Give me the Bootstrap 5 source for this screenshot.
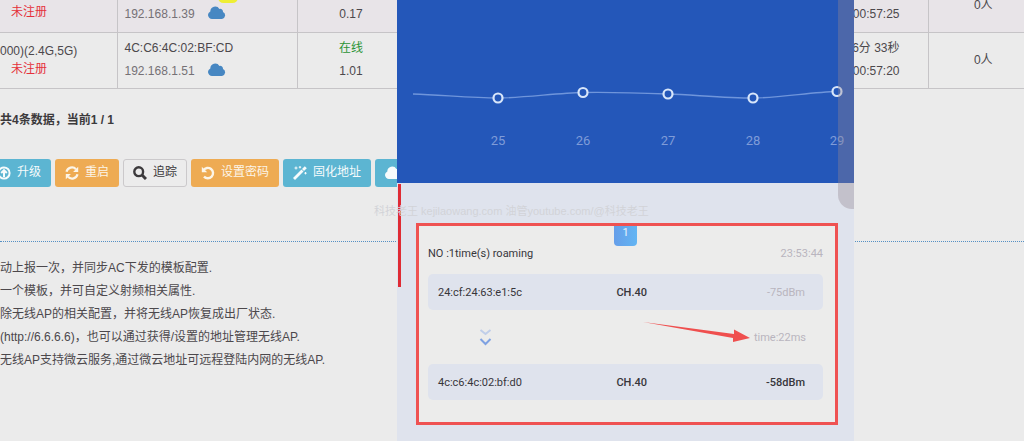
<!DOCTYPE html>
<html lang="zh-CN">
<head>
<meta charset="utf-8">
<meta name="viewport" content="width=device-width, initial-scale=1">
<title>无线AP管理</title>
<link href="https://cdn.jsdelivr.net/npm/bootstrap@5.3.0/dist/css/bootstrap.min.css" rel="stylesheet">
<style>
body{background:#ebebeb;color:#4c484c;font:12px/23px "Liberation Sans","Noto Sans CJK SC",sans-serif}
.screen{min-height:100vh}
.ap-table{table-layout:fixed;width:100%;border-collapse:collapse;white-space:nowrap}
.ap-table td{border:1px solid #c6c4c7;border-top:0;padding:4px 7px;height:56px}
.ap-table td:first-child{border-left:0;padding-left:0;line-height:18px}
.ap-table td:last-child{border-right:0;padding-left:21px}
.ap-table tr.cut td{background:#e8e4e8;height:32px;padding-top:3px;padding-bottom:3px;vertical-align:top}
.ap-table td.uptime{padding-right:28px}
.unreg{color:#e5303a;padding-left:11px}
.ip{color:#757176}
.online{color:#2c9436}
.cloud{width:18px;height:14px;fill:#4787c2;margin:0 0 4px 13px}
.dot-mark{top:-8px;left:218px;width:20px;height:11px;border-radius:6px;background:#eeee35}
.summary{margin:20px 0 27px;color:#3c3a3c}
.tools{gap:4px;margin-left:-13px}
.tool{display:flex;align-items:center;gap:6px;height:28px;padding:0 9px;border:1px solid transparent;border-radius:3px;color:#fbf9f4;font-size:12px;white-space:nowrap}
.tool svg{width:14px;height:14px;fill:none;stroke:currentColor;stroke-width:2.4}
.tool-blue,.tool-blue:hover{background:#5cb5d2;color:#f6fbfc}
.tool-orange,.tool-orange:hover{background:#eeab53;color:#fcf5e8}
.tool-plain,.tool-plain:hover{background:#ececec;border-color:#cbc9cb;color:#3c3a3c}
.notes{margin-top:54px;padding-top:15px;border-top:1px dotted #5590c4;white-space:nowrap}
.phone{top:0;bottom:0;left:calc(50% - 115px);right:170px;background:#dfe3ed;font-family:Roboto,sans-serif;font-size:11px;color:#37363b}
.chart{height:183px;background:#2457b9}
.chart text{font-size:13px;fill:#7f9cd8;text-anchor:middle}
.handle{top:0;right:0;width:16px;height:209px;border-bottom-left-radius:14px;background:rgba(146,134,144,.36)}
.redline{top:184px;left:1px;width:3px;height:103px;background:#df2b34}
.roam{margin:40px 16px 0 19px;border:3px solid #ef5252;background:#ececeb;padding:0 12px 22px 9px}
.count{width:23px;height:20px;line-height:14px;border-radius:0 0 4px 4px;background:linear-gradient(90deg,#659ee9,#62b5f3);color:#e8f3fc}
.roam-title{line-height:16px;padding-bottom:12px}
.hop{height:36px;padding:0 18px 0 10px;border-radius:5px;background:#dfe3ed;display:grid;grid-template-columns:8fr 60px 7fr;align-items:center}
.between{height:54px;padding:0 17px 0 51px}
.pale{color:#b9b5be}
.watermark{top:200px;left:calc(50% - 138px);font-size:11px;color:#d2d3d8;white-space:nowrap}
</style>
</head>
<body>
<div class="screen position-relative overflow-hidden">
  <main>
    <table class="ap-table">
      <colgroup><col style="width:117px"><col style="width:180px"><col style="width:108px"><col><col style="width:96px"></colgroup>
      <tbody>
        <tr class="cut">
          <td><div class="unreg">未注册</div></td>
          <td><span class="ip">192.168.1.39</span><svg class="cloud" viewBox="0 0 18 14" aria-hidden="true"><path d="M4 13A4 4 0 0 1 2.300 5.400 4.900 4.900 0 0 1 11.400 2.900 2.900 2.900 0 0 1 15 6 3.700 3.700 0 0 1 14 13Z"/></svg></td>
          <td class="text-center">0.17</td>
          <td class="uptime text-end">00:57:25</td>
          <td class="text-center pt-0"><div style="line-height:11px">0人</div></td>
        </tr>
        <tr>
          <td class="align-middle"><div>000)(2.4G,5G)</div><div class="unreg">未注册</div></td>
          <td><div>4C:C6:4C:02:BF:CD</div><span class="ip">192.168.1.51</span><svg class="cloud" viewBox="0 0 18 14" aria-hidden="true"><path d="M4 13A4 4 0 0 1 2.300 5.400 4.900 4.900 0 0 1 11.400 2.900 2.900 2.900 0 0 1 15 6 3.700 3.700 0 0 1 14 13Z"/></svg></td>
          <td class="text-center"><div class="online">在线</div>1.01</td>
          <td class="uptime text-end">6分 33秒<br>00:57:20</td>
          <td class="text-center align-middle">0人</td>
        </tr>
      </tbody>
    </table>
    <div class="dot-mark position-absolute"></div>
    <p class="summary fw-bold">共4条数据，当前1 / 1</p>
    <div class="tools d-flex">
      <button type="button" class="tool tool-blue"><svg viewBox="0 0 14 14"><circle cx="7" cy="7" r="5.600" stroke-width="2"/><path d="M7 11V4.500M4.200 7 7 4.200 9.800 7" stroke-width="2"/></svg>升级</button>
      <button type="button" class="tool tool-orange"><svg viewBox="0 0 14 14"><path d="M1.500 5.800A5.600 5.600 0 0 1 11 3.200M12.500 8.200A5.600 5.600 0 0 1 3 10.800" stroke-width="2.200"/><path d="M13.200.8v5.100H8.100ZM.8 13.200V8.100h5.100Z" fill="currentColor" stroke="none"/></svg>重启</button>
      <button type="button" class="tool tool-plain"><svg viewBox="0 0 14 14"><circle cx="5.700" cy="5.700" r="4.400"/><path d="m9 9 4 4" stroke-width="3"/></svg>追踪</button>
      <button type="button" class="tool tool-orange"><svg viewBox="0 0 14 14"><path d="M2.500 4.200A5.200 5.200 0 1 1 3 10.600"/><path d="M.8.800v5.400h5.400Z" fill="currentColor" stroke="none"/></svg>设置密码</button>
      <button type="button" class="tool tool-blue"><svg viewBox="0 0 14 14"><path d="M1 13 9.500 4.500" stroke-width="2.800"/><path d="m10 4 2.800-2.800" stroke-width="2.800"/><path d="M3 .5v3M1.500 2h3M7 0v2.400M5.800 1.200h2.400M12.500 6v2.400M11.300 7.200h2.400" stroke-width="1"/></svg>固化地址</button>
      <button type="button" class="tool tool-blue" aria-label="云服务"><svg style="width:18px" viewBox="0 0 18 14" aria-hidden="true"><path fill="currentColor" stroke="none" d="M4 13A4 4 0 0 1 2.300 5.400 4.900 4.900 0 0 1 11.400 2.900 2.900 2.900 0 0 1 15 6 3.700 3.700 0 0 1 14 13Z"/></svg></button>
    </div>
    <div class="notes">
      <div>动上报一次，并同步AC下发的模板配置.</div>
      <div>一个模板，并可自定义射频相关属性.</div>
      <div>除无线AP的相关配置，并将无线AP恢复成出厂状态.</div>
      <div>(http://6.6.6.6)，也可以通过获得/设置的地址管理无线AP.</div>
      <div>无线AP支持微云服务,通过微云地址可远程登陆内网的无线AP.</div>
    </div>
  </main>
  <section class="phone position-absolute">
    <div class="chart">
      <svg class="d-block w-100 h-100" viewBox="0 0 457 183">
        <path d="M16 94C45 95 75 98 101 98S160 93 186 92.500 245 93 271 94 330 98 356 98 415 92 440 91.500" fill="none" stroke="#6f95db" stroke-width="1.300"/>
        <g fill="#2457b9" stroke="#d8e6fa" stroke-width="2.200"><circle cx="101" cy="98" r="4.500"/><circle cx="186" cy="92.500" r="4.500"/><circle cx="271" cy="94" r="4.500"/><circle cx="356" cy="98" r="4.500"/><circle cx="440" cy="91.500" r="4.500"/></g>
        <text x="101" y="145">25</text><text x="186" y="145">26</text><text x="271" y="145">27</text><text x="356" y="145">28</text><text x="440" y="145">29</text>
      </svg>
    </div>
    <div class="roam">
      <div class="count text-center mx-auto">1</div>
      <div class="roam-title d-flex justify-content-between"><span>NO :1time(s) roaming</span><span class="pale">23:53:44</span></div>
      <div class="hop"><span>24:cf:24:63:e1:5c</span><span class="text-center fw-medium">CH.40</span><span class="text-end pale">-75dBm</span></div>
      <div class="between d-flex align-items-center">
        <svg width="13" height="20" viewBox="0 0 13 20" fill="none" stroke-width="2"><path d="m1.500 3 5 4 5-4" stroke="#c0cee9"/><path d="m1.500 12 5 5 5-5" stroke="#7fa2e2"/></svg>
        <svg class="ms-auto me-1" width="107" height="40" viewBox="0 0 107 40"><path d="M0 5 91 17V12.500L107 21 90 25V21Z" fill="#ef4f4e"/></svg>
        <span class="pale">time:22ms</span>
      </div>
      <div class="hop"><span>4c:c6:4c:02:bf:d0</span><span class="text-center fw-medium">CH.40</span><span class="text-end fw-medium">-58dBm</span></div>
    </div>
    <div class="handle position-absolute"></div>
    <div class="redline position-absolute"></div>
  </section>
  <div class="watermark position-absolute">科技老王 kejilaowang.com 油管youtube.com/@科技老王</div>
</div>
<script src="https://cdn.jsdelivr.net/npm/bootstrap@5.3.0/dist/js/bootstrap.bundle.min.js"></script>
</body>
</html>
